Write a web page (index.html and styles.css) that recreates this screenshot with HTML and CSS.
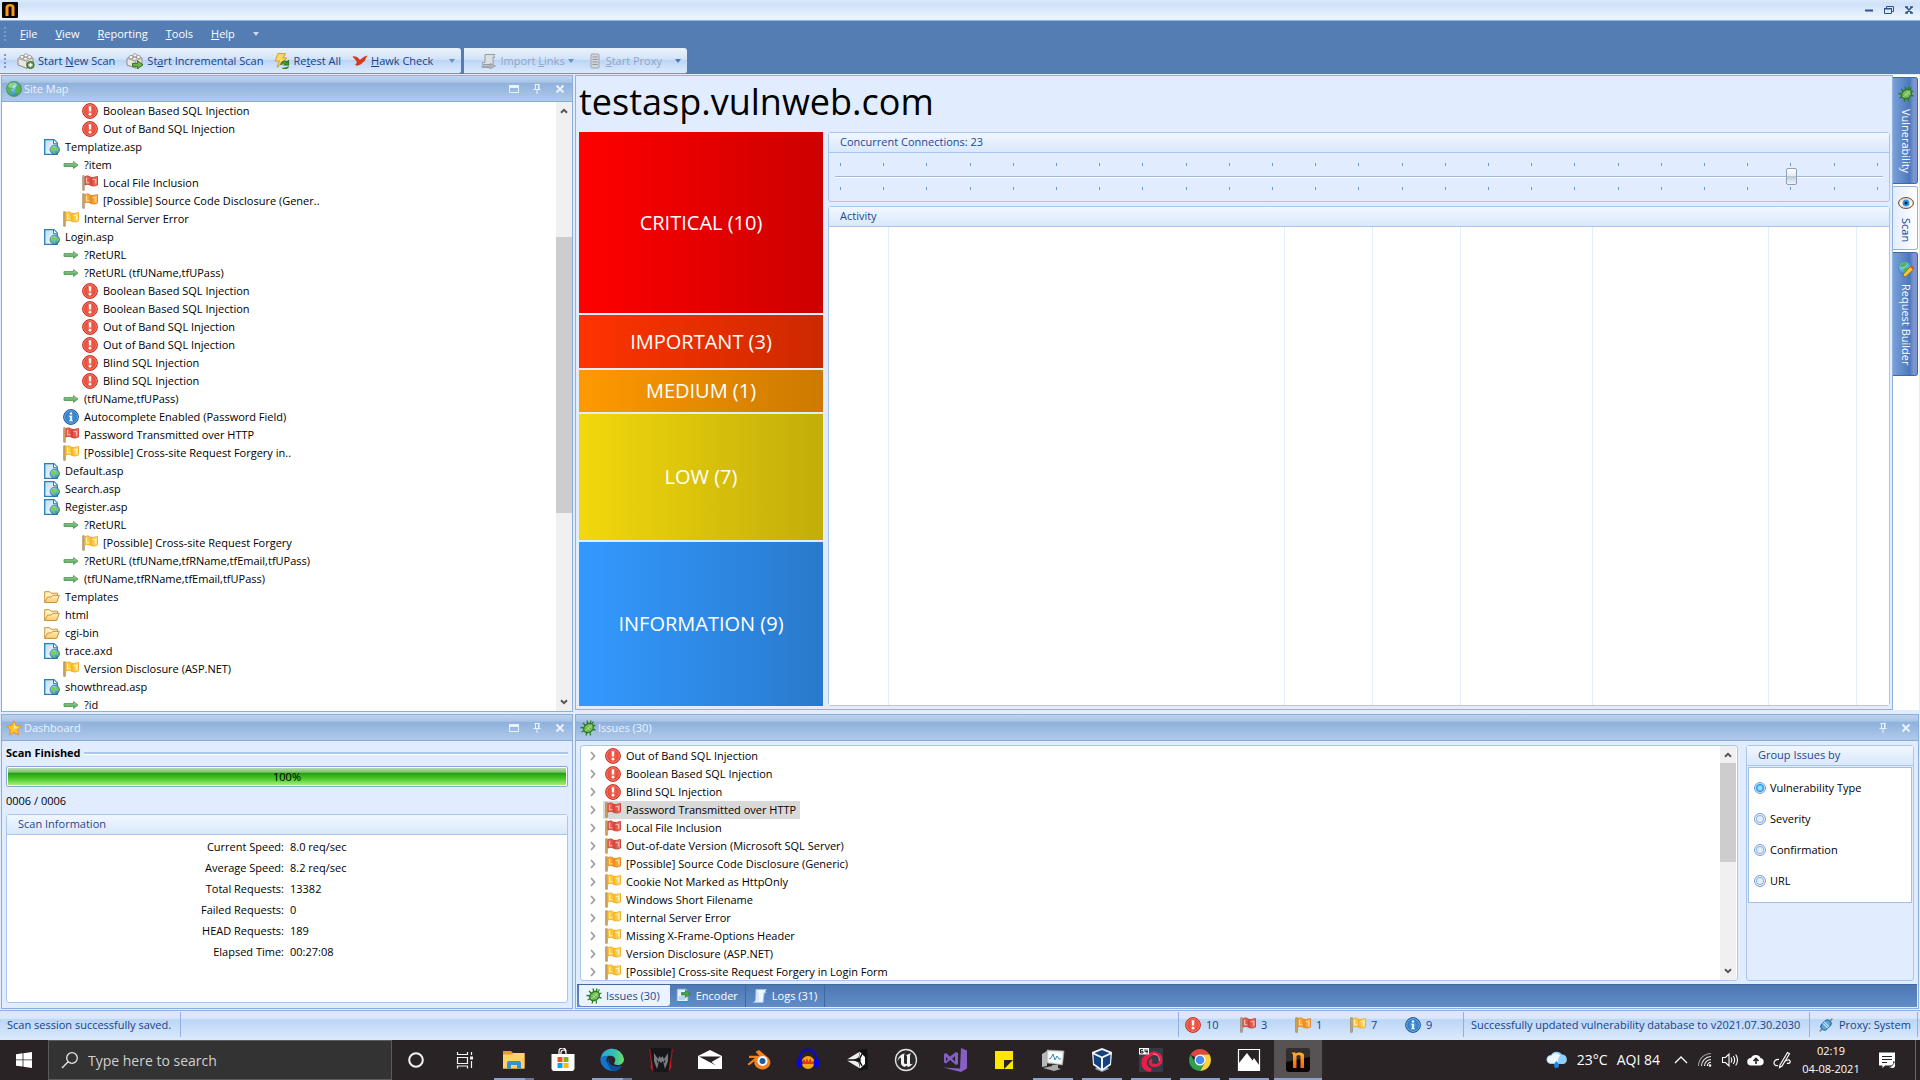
FILE: index.html
```html
<!DOCTYPE html>
<html lang="en">
<head>
<meta charset="utf-8">
<title>testasp.vulnweb.com</title>
<link rel="stylesheet" href="styles.css">
</head>
<body>
<svg class="defs" width="0" height="0" aria-hidden="true">
  <defs>
    <linearGradient id="g-red" x1="0" y1="0" x2="1" y2="0"><stop offset="0" stop-color="#f4766a"/><stop offset=".5" stop-color="#d94538"/><stop offset="1" stop-color="#f98376"/></linearGradient>
    <linearGradient id="g-orange" x1="0" y1="0" x2="1" y2="0"><stop offset="0" stop-color="#ffc04a"/><stop offset=".5" stop-color="#f08c1c"/><stop offset="1" stop-color="#ffc768"/></linearGradient>
    <linearGradient id="g-yellow" x1="0" y1="0" x2="1" y2="0"><stop offset="0" stop-color="#ffdc5e"/><stop offset=".5" stop-color="#fbb929"/><stop offset="1" stop-color="#ffe88a"/></linearGradient>
    <linearGradient id="g-arrow" x1="0" y1="0" x2="0" y2="1"><stop offset="0" stop-color="#a6dca0"/><stop offset="1" stop-color="#3f9a44"/></linearGradient>
    <linearGradient id="g-folder" x1="0" y1="0" x2="0" y2="1"><stop offset="0" stop-color="#fff1b8"/><stop offset="1" stop-color="#f9c96b"/></linearGradient>
    <linearGradient id="g-page" x1="0" y1="0" x2="1" y2="1"><stop offset="0" stop-color="#b9ddf2"/><stop offset="1" stop-color="#ffffff"/></linearGradient>
    <radialGradient id="g-globe" cx=".35" cy=".3" r=".8"><stop offset="0" stop-color="#9fe0ff"/><stop offset="1" stop-color="#1f78c4"/></radialGradient>
    <radialGradient id="g-crit"><stop offset="0" stop-color="#ff6e5c"/><stop offset="1" stop-color="#dd3a2a"/></radialGradient>
    <radialGradient id="g-info"><stop offset="0" stop-color="#56a8ea"/><stop offset="1" stop-color="#2268b4"/></radialGradient>
    <linearGradient id="g-edge" x1="0" y1="0" x2="1" y2="0"><stop offset="0" stop-color="#2ba4dd"/><stop offset=".6" stop-color="#35c1b1"/><stop offset="1" stop-color="#6be05f"/></linearGradient>
    <linearGradient id="g-n" x1="0" y1="0" x2="0" y2="1"><stop offset="0" stop-color="#ffb02e"/><stop offset="1" stop-color="#f0660a"/></linearGradient>
  </defs>
  <symbol id="i-crit" viewBox="0 0 16 16"><circle cx="8" cy="8" r="7.4" fill="url(#g-crit)" stroke="#c23022"/><circle cx="8" cy="8" r="6.3" fill="none" stroke="#ff9686" stroke-width=".8"/><path d="M6.600 3.200h2.800l-.5 5.400H7.100z" fill="#fff"/><circle cx="8" cy="11.200" r="1.400" fill="#fff"/></symbol>
  <symbol id="i-info" viewBox="0 0 16 16"><circle cx="8" cy="8" r="7.4" fill="url(#g-info)" stroke="#1d5a9c"/><circle cx="8" cy="8" r="6.3" fill="none" stroke="#8cc4f2" stroke-width=".8"/><circle cx="8" cy="4.4" r="1.2" fill="#fff"/><path d="M6.3 6.8h2.6v4.4h1v1H6.2v-1h1V7.8h-.9z" fill="#fff"/></symbol>
  <symbol id="i-flag-red" viewBox="0 0 16 16"><path d="M1.500 .5v15" stroke="#7b5a28" stroke-width="2"/><path d="M1.500 1v14" stroke="#d1a765" stroke-width=".9"/><path d="M3 1.600C5 .6 7 .8 8.600 2.200 10.500 3 12 2.200 15.500 1.500v8.500c-2.500 1.200-5 1.300-7 .2-1.500-1-3.500-1.200-5.500-.2z" fill="url(#g-red)" stroke="#c9473c"/><path d="M8.600 2.500v8" stroke="#c9473c" stroke-width=".7"/><path d="M4.600 3v4.800h2.800M10.500 4.600h3.200v3.800" fill="none" stroke="#ffc9c2" stroke-width=".9"/></symbol>
  <symbol id="i-flag-orange" viewBox="0 0 16 16"><path d="M1.500 .5v15" stroke="#7b5a28" stroke-width="2"/><path d="M1.500 1v14" stroke="#d1a765" stroke-width=".9"/><path d="M3 1.600C5 .6 7 .8 8.600 2.200 10.500 3 12 2.200 15.500 1.500v8.500c-2.500 1.200-5 1.300-7 .2-1.500-1-3.500-1.200-5.500-.2z" fill="url(#g-orange)" stroke="#e58a24"/><path d="M8.600 2.500v8" stroke="#e58a24" stroke-width=".7"/><path d="M4.600 3v4.800h2.800M10.500 4.600h3.200v3.800" fill="none" stroke="#ffe5ae" stroke-width=".9"/></symbol>
  <symbol id="i-flag-yellow" viewBox="0 0 16 16"><path d="M1.500 .5v15" stroke="#7b5a28" stroke-width="2"/><path d="M1.500 1v14" stroke="#d1a765" stroke-width=".9"/><path d="M3 1.600C5 .6 7 .8 8.600 2.200 10.500 3 12 2.200 15.500 1.500v8.500c-2.500 1.200-5 1.300-7 .2-1.500-1-3.500-1.200-5.500-.2z" fill="url(#g-yellow)" stroke="#f0b02e"/><path d="M8.600 2.500v8" stroke="#f0b02e" stroke-width=".7"/><path d="M4.600 3v4.800h2.800M10.500 4.600h3.200v3.800" fill="none" stroke="#fff6c8" stroke-width=".9"/></symbol>
  <symbol id="i-arrow" viewBox="0 0 16 16"><path d="M1 6.500h9.500V4.500L15 8l-4.500 3.500v-2H1z" fill="url(#g-arrow)" stroke="#4d9a50" stroke-width=".8"/></symbol>
  <symbol id="i-page" viewBox="0 0 16 16"><path d="M.7.7h9.300l3.300 3.300v11.300H.7z" fill="url(#g-page)" stroke="#2c7fb4" stroke-width="1.300"/><path d="M9.500.7v4h4" fill="#fff" stroke="#2c7fb4"/><circle cx="10.800" cy="10.700" r="4.700" fill="url(#g-globe)" stroke="#2b6f9e" stroke-width=".7"/><path d="M8.500 7.300l3 1.700-1.700 3.200 2 2.700-2.600-1.200-1.300-4zM12.500 7.500l2.200 2-.5 3.500-1.700-1.500z" fill="#7ed321"/></symbol>
  <symbol id="i-folder" viewBox="0 0 16 16"><path d="M.7 13.500V2.700h5l1.300 1.500h6.500v3" fill="#fff0c0" stroke="#c9923c"/><path d="M.7 13.500L3.600 8h3.600l1.600-1.700h6.500l-2.600 7.200z" fill="url(#g-folder)" stroke="#c9923c"/></symbol>
  <symbol id="i-globe" viewBox="0 0 16 16"><circle cx="8" cy="8" r="7.300" fill="url(#g-globe)" stroke="#4c9a48" stroke-width="1.200"/><path d="M3 3.500l4-1.700 2 1.700-2.500 2 .5 2-3 1.500 2.500 2-.5 3-3-2.500-1-4zM9.500 6l3-2.500 2 3-.5 5-3 2.500-1.500-4z" fill="#55b545"/><ellipse cx="6.500" cy="4.500" rx="4" ry="2.500" fill="#fff" opacity=".35"/></symbol>
  <symbol id="i-star" viewBox="0 0 16 16"><path d="M8 .8l2.200 4.800 5.200.6-3.900 3.500 1.100 5.300L8 12.300 3.400 15l1.100-5.300L.6 6.200l5.200-.6z" fill="#ffc52e" stroke="#e8912a"/><path d="M8 2.800l1.300 3.600 3.500.6L8 9z" fill="#fff0a0" opacity=".8"/></symbol>
  <symbol id="i-bug" viewBox="0 0 16 16"><path d="M3 3l3 3M7 .5l1 4M11 .5l-1 4M.5 7.500l5 .5M1.500 12l4-2M6 15.500l1.500-4M10.500 15.500l-.5-4M15.500 5l-3.500 1.500M15.500 10l-4-1M13.500 1.500l-2 3" stroke="#2c7d22" stroke-width="1.300"/><ellipse cx="8.500" cy="8" rx="5.300" ry="4.200" transform="rotate(-38 8.500 8)" fill="#6fb650" stroke="#2b7a22" stroke-width="1.200"/><path d="M5 11l7-6M6.500 6.800l4 4M8.500 5l3.500 3.500" stroke="#c2e6a8" stroke-width=".8"/></symbol>
  <symbol id="i-brick" viewBox="0 0 18 16"><path d="M1 5.500L6 3l10 2v7l-6 3.300L1 12z" fill="#e9e7e3" stroke="#8f8b84"/><path d="M1 5.500l8.500 2.800L16 5M9.500 8.300v7" fill="none" stroke="#aaa69e"/><ellipse cx="5" cy="4" rx="2" ry="1.600" fill="#fafafa" stroke="#8f8b84" stroke-width=".8"/><ellipse cx="9" cy="2.400" rx="2" ry="1.600" fill="#fafafa" stroke="#8f8b84" stroke-width=".8"/><ellipse cx="12.500" cy="4" rx="2" ry="1.600" fill="#fafafa" stroke="#8f8b84" stroke-width=".8"/><ellipse cx="8.500" cy="5.800" rx="2" ry="1.500" fill="#fafafa" stroke="#8f8b84" stroke-width=".8"/></symbol>
  <symbol id="i-new" viewBox="0 0 18 16"><use href="#i-brick" width="18" height="16"/><circle cx="13.500" cy="12" r="3.600" fill="#5f9f45" stroke="#376b26"/><path d="M13.500 10v4M11.500 12h4" stroke="#fff" stroke-width="1.300"/></symbol>
  <symbol id="i-incr" viewBox="0 0 18 16"><use href="#i-brick" width="18" height="16"/><path d="M6.500 10.300h5V7.800l5.500 4-5.500 4v-2.500h-5z" fill="#6bb848" stroke="#376b26"/></symbol>
  <symbol id="i-retest" viewBox="0 0 16 16"><path d="M4 .6h7.500L8.800 5h4L3 14.500 5.500 8H1.200z" fill="#ffd968" stroke="#d79a2c"/><path d="M7 12a3.600 3.600 0 0 1 6-3l1.500-1.200V12h-4l1.300-1.300M14.500 13.500a4 4 0 0 1-6 1.500" fill="#4b9b38" stroke="#2f7a22" stroke-width="1.200"/></symbol>
  <symbol id="i-hawk" viewBox="0 0 16 16"><path d="M.5 3.300c3.500-.3 6 1.200 7.300 3.700C9.500 6 11 3.500 15.700 2.500c-.7 1.200-1.200 2-2 2.700.3 1.200-1.200 3.500-3.200 4.300-.5 1.500-2.500 2.500-4.200 2.700l-1.800 1-.2-1.300-1.300-.2 1.300-1.200c.7-1 .7-2.200-.5-3C3 6.500 1.500 5 .5 3.300z" fill="#d8391d"/></symbol>
  <symbol id="i-import" viewBox="0 0 16 16"><path d="M4 1.500h10c-1.500 1-1.500 3 0 3h-2v7H1.500v-2H4z" fill="#dcdfe4" stroke="#989ca3"/><path d="M1 13h8v-2.500L14.500 13 9 16v-1.500H1z" fill="#b4b7bc" stroke="#909498" stroke-width=".7"/></symbol>
  <symbol id="i-server" viewBox="0 0 16 16"><rect x="4" y="1" width="8" height="14" rx="1" fill="#d2d5da" stroke="#a1a5ac"/><path d="M5.500 4h5M5.500 6.500h5M5.500 9h5M5.500 11.500h5" stroke="#93979e"/></symbol>
  <symbol id="i-enc" viewBox="0 0 16 16"><path d="M1 1h9l2 2v12H1z" fill="#e4f1fc" stroke="#6f9fd0"/><path d="M1 13h12v2.500H1z" fill="#3f8ad2"/><path d="M3 9h6M3 11h6" stroke="#8bb5de"/><path d="M5.500 4.500h4V2l5 3.800-5 3.800V7h-4z" fill="#4ca24a" stroke="#2d7430" stroke-width=".7"/></symbol>
  <symbol id="i-log" viewBox="0 0 16 16"><path d="M4 1.500h10.500c-1.500.5-1.500 2.500-.2 3h-2L11 14.500H1.500c1.800-.6 2-2 2.300-4z" fill="#eef6fe" stroke="#9cc2ea"/><path d="M4.500 3c1.500 2 2 6 1.500 11" fill="none" stroke="#cfe1f5" stroke-width="1.500"/></symbol>
  <symbol id="i-eye" viewBox="0 0 16 16"><ellipse cx="8" cy="8" rx="7.500" ry="5.500" fill="#f3d2b0" stroke="#6f5840"/><ellipse cx="8" cy="8.300" rx="6" ry="3.700" fill="#fff"/><circle cx="8" cy="8" r="3.500" fill="#2f95e4"/><circle cx="8" cy="8" r="1.500" fill="#0b2238"/></symbol>
  <symbol id="i-build" viewBox="0 0 16 16"><circle cx="7" cy="7" r="6.500" fill="url(#g-globe)" stroke="#3e7ea8" stroke-width=".7"/><path d="M2 4l4-3 3 1.500-2 3-4 1zM5 8l4-2 4 1-2 5-4-1z" fill="#55b545"/><path d="M5.500 13L12.500 5.500l3 2.700L8 15.500l-3 .3z" fill="#f5c73b" stroke="#7a5717" stroke-width=".7"/><path d="M12 6l1.800-1.800L16.500 7l-1.500 1.600z" fill="#d94c3c"/></symbol>
  <symbol id="i-plug" viewBox="0 0 16 16"><g transform="rotate(45 8 8)"><path d="M8-1v18" stroke="#8d8f86" stroke-width="1.800"/><rect x="4.500" y="2.500" width="7" height="11" rx="3" fill="#58a5de" stroke="#2768a3"/><path d="M4.500 7h7M4.500 9h7" stroke="#d3ebfb"/></g></symbol>
  <symbol id="i-max" viewBox="0 0 12 12"><path d="M1.500 2.500h9v7h-9z" fill="none" stroke="currentColor"/><path d="M1 2h10v3H1z" fill="currentColor"/></symbol>
  <symbol id="i-pin" viewBox="0 0 12 12"><path d="M4.500 1v5.500M3.500 1.500h5M2.500 6.500h7M6 7v4" fill="none" stroke="currentColor"/><path d="M7 1h1.500v5.500H7z" fill="currentColor"/></symbol>
  <symbol id="i-close" viewBox="0 0 12 12"><path d="M2.500 2.500l7 7M9.500 2.500l-7 7" stroke="currentColor" stroke-width="2"/></symbol>
  <symbol id="i-up" viewBox="0 0 8 8"><path d="M1 5.800L4 2.800l3 3" fill="none" stroke="currentColor" stroke-width="2"/></symbol>
  <symbol id="i-down" viewBox="0 0 8 8"><path d="M1 2.200l3 3 3-3" fill="none" stroke="currentColor" stroke-width="2"/></symbol>
  <symbol id="i-right" viewBox="0 0 8 10"><path d="M2 1l3.500 4L2 9" fill="none" stroke="currentColor" stroke-width="1.800"/></symbol>
  <symbol id="i-caret" viewBox="0 0 6 4"><path d="M0 0h6L3 4z" fill="currentColor"/></symbol>
  <symbol id="i-n" viewBox="0 0 24 24"><rect width="24" height="24" rx="3" fill="#0b0604"/><path d="M0 3a3 3 0 0 1 3-3h18a3 3 0 0 1 3 3v6L0 14z" fill="#fff" opacity=".16"/><path d="M7 20V6.500l-1.500-2h4V6c2-2 7.500-2 8.500.8V20h-3.500V8c-1-1.500-3-1.300-4 0v12z" fill="url(#g-n)"/></symbol>
</svg>

<header class="titlebar">
  <svg class="applogo" viewBox="0 0 16 16"><rect width="16" height="16" rx="1" fill="#0b0300"/><path d="M3.500 14V5C3.500 1 12.500 1 12.500 5v9h-3V5.500c0-1.300-3-1.300-3 0V14z" fill="#f59a1c"/></svg>
  <div class="winbtns">
    <button aria-label="Minimize"><svg viewBox="0 0 12 12"><path d="M2 6.500h8" stroke="#2f5489" stroke-width="2"/></svg></button>
    <button aria-label="Restore"><svg viewBox="0 0 12 12"><path d="M1.500 4.500h7v5h-7zM3.500 4V2.500h7v5H9" fill="none" stroke="#2f5489"/><path d="M1 4h8v1.500H1z" fill="#2f5489"/></svg></button>
    <button aria-label="Close"><svg viewBox="0 0 12 12"><path d="M3 3l6 6M9 3L3 9M2 3h3M7 3h3M2 9h3M7 9h3" stroke="#2f5489" stroke-width="1.500"/></svg></button>
  </div>
</header>
<nav class="menubar">
  <span class="grip"></span>
  <button><u>F</u>ile</button><button><u>V</u>iew</button><button><u>R</u>eporting</button><button><u>T</u>ools</button><button><u>H</u>elp</button>
  <svg class="caret"><use href="#i-caret"/></svg>
</nav>
<div class="toolbars">
  <div class="toolbar first">
    <span class="grip"></span>
    <button><svg class="ic wide"><use href="#i-new"/></svg><span>Start <u>N</u>ew Scan</span></button>
    <button><svg class="ic wide"><use href="#i-incr"/></svg><span>St<u>a</u>rt Incremental Scan</span></button>
    <button><svg class="ic"><use href="#i-retest"/></svg><span>Re<u>t</u>est All</span></button>
    <button><svg class="ic"><use href="#i-hawk"/></svg><span><u>H</u>awk Check</span></button>
    <svg class="caret"><use href="#i-caret"/></svg>
  </div>
  <div class="toolbar second">
    <span class="grip"></span>
    <button disabled><svg class="ic"><use href="#i-import"/></svg><span>Import <u>L</u>inks</span><svg class="caret"><use href="#i-caret"/></svg></button>
    <button disabled><svg class="ic"><use href="#i-server"/></svg><span><u>S</u>tart Proxy</span></button>
    <svg class="caret"><use href="#i-caret"/></svg>
  </div>
</div>

<main class="workspace">
  <section class="panel sitemap">
    <header class="phead"><svg class="ic"><use href="#i-globe"/></svg><h2>Site Map</h2>
      <button aria-label="Maximize"><svg><use href="#i-max"/></svg></button><button aria-label="Pin"><svg><use href="#i-pin"/></svg></button><button aria-label="Close"><svg><use href="#i-close"/></svg></button></header>
    <div class="scroller">
      <ul class="tree">
        <li class="l3"><svg class="ic"><use href="#i-crit"/></svg>Boolean Based SQL Injection</li>
        <li class="l3"><svg class="ic"><use href="#i-crit"/></svg>Out of Band SQL Injection</li>
        <li class="l1"><svg class="ic"><use href="#i-page"/></svg>Templatize.asp</li>
        <li class="l2"><svg class="ic"><use href="#i-arrow"/></svg>?item</li>
        <li class="l3"><svg class="ic"><use href="#i-flag-red"/></svg>Local File Inclusion</li>
        <li class="l3"><svg class="ic"><use href="#i-flag-orange"/></svg>[Possible] Source Code Disclosure (Gener..</li>
        <li class="l2"><svg class="ic"><use href="#i-flag-yellow"/></svg>Internal Server Error</li>
        <li class="l1"><svg class="ic"><use href="#i-page"/></svg>Login.asp</li>
        <li class="l2"><svg class="ic"><use href="#i-arrow"/></svg>?RetURL</li>
        <li class="l2"><svg class="ic"><use href="#i-arrow"/></svg>?RetURL (tfUName,tfUPass)</li>
        <li class="l3"><svg class="ic"><use href="#i-crit"/></svg>Boolean Based SQL Injection</li>
        <li class="l3"><svg class="ic"><use href="#i-crit"/></svg>Boolean Based SQL Injection</li>
        <li class="l3"><svg class="ic"><use href="#i-crit"/></svg>Out of Band SQL Injection</li>
        <li class="l3"><svg class="ic"><use href="#i-crit"/></svg>Out of Band SQL Injection</li>
        <li class="l3"><svg class="ic"><use href="#i-crit"/></svg>Blind SQL Injection</li>
        <li class="l3"><svg class="ic"><use href="#i-crit"/></svg>Blind SQL Injection</li>
        <li class="l2"><svg class="ic"><use href="#i-arrow"/></svg>(tfUName,tfUPass)</li>
        <li class="l2"><svg class="ic"><use href="#i-info"/></svg>Autocomplete Enabled (Password Field)</li>
        <li class="l2"><svg class="ic"><use href="#i-flag-red"/></svg>Password Transmitted over HTTP</li>
        <li class="l2"><svg class="ic"><use href="#i-flag-yellow"/></svg>[Possible] Cross-site Request Forgery in..</li>
        <li class="l1"><svg class="ic"><use href="#i-page"/></svg>Default.asp</li>
        <li class="l1"><svg class="ic"><use href="#i-page"/></svg>Search.asp</li>
        <li class="l1"><svg class="ic"><use href="#i-page"/></svg>Register.asp</li>
        <li class="l2"><svg class="ic"><use href="#i-arrow"/></svg>?RetURL</li>
        <li class="l3"><svg class="ic"><use href="#i-flag-yellow"/></svg>[Possible] Cross-site Request Forgery</li>
        <li class="l2"><svg class="ic"><use href="#i-arrow"/></svg>?RetURL (tfUName,tfRName,tfEmail,tfUPass)</li>
        <li class="l2"><svg class="ic"><use href="#i-arrow"/></svg>(tfUName,tfRName,tfEmail,tfUPass)</li>
        <li class="l1"><svg class="ic"><use href="#i-folder"/></svg>Templates</li>
        <li class="l1"><svg class="ic"><use href="#i-folder"/></svg>html</li>
        <li class="l1"><svg class="ic"><use href="#i-folder"/></svg>cgi-bin</li>
        <li class="l1"><svg class="ic"><use href="#i-page"/></svg>trace.axd</li>
        <li class="l2"><svg class="ic"><use href="#i-flag-yellow"/></svg>Version Disclosure (ASP.NET)</li>
        <li class="l1"><svg class="ic"><use href="#i-page"/></svg>showthread.asp</li>
        <li class="l2"><svg class="ic"><use href="#i-arrow"/></svg>?id</li>
      </ul>
      <div class="sbar tall"><svg><use href="#i-up"/></svg><div class="groove"><div class="thumb"></div></div><svg><use href="#i-down"/></svg></div>
    </div>
  </section>

  <section class="scan">
    <div class="doc">
      <h1>testasp.vulnweb.com</h1>
      <div class="docbody">
        <div class="tiles">
          <div class="tile critical">CRITICAL (10)</div>
          <div class="tile important">IMPORTANT (3)</div>
          <div class="tile medium">MEDIUM (1)</div>
          <div class="tile low">LOW (7)</div>
          <div class="tile information">INFORMATION (9)</div>
        </div>
        <div class="charts">
          <div class="group conn">
            <h3><label for="conn">Concurrent Connections: 23</label></h3>
            <div class="slider">
              <div class="ticks"><i></i><i></i><i></i><i></i><i></i><i></i><i></i><i></i><i></i><i></i><i></i><i></i><i></i><i></i><i></i><i></i><i></i><i></i><i></i><i></i><i></i><i></i><i></i><i></i><i></i></div>
              <input type="range" id="conn" min="1" max="25" value="23">
              <div class="ticks"><i></i><i></i><i></i><i></i><i></i><i></i><i></i><i></i><i></i><i></i><i></i><i></i><i></i><i></i><i></i><i></i><i></i><i></i><i></i><i></i><i></i><i></i><i></i><i></i><i></i></div>
            </div>
          </div>
          <div class="group activity">
            <h3>Activity</h3>
            <div class="cols"><span></span><span></span><span></span><span></span><span></span><span></span><span></span><span></span></div>
          </div>
        </div>
      </div>
    </div>
    <nav class="sidetabs">
      <button class="vul"><svg class="ic"><use href="#i-bug"/></svg>Vulnerability</button>
      <button class="on"><svg class="ic"><use href="#i-eye"/></svg>Scan</button>
      <button class="req"><svg class="ic"><use href="#i-build"/></svg>Request Builder</button>
    </nav>
  </section>

  <section class="panel dashboard">
    <header class="phead"><svg class="ic"><use href="#i-star"/></svg><h2>Dashboard</h2>
      <button aria-label="Maximize"><svg><use href="#i-max"/></svg></button><button aria-label="Pin"><svg><use href="#i-pin"/></svg></button><button aria-label="Close"><svg><use href="#i-close"/></svg></button></header>
    <div class="dash">
      <div class="finished"><b>Scan Finished</b></div>
      <div class="progress" role="progressbar" aria-label="Scan progress" aria-valuenow="100"><span style="width:100%">100%</span></div>
      <div class="count">0006 / 0006</div>
      <div class="group info">
        <h3>Scan Information</h3>
        <table>
          <tr><th>Current Speed:</th><td>8.0 req/sec</td></tr>
          <tr><th>Average Speed:</th><td>8.2 req/sec</td></tr>
          <tr><th>Total Requests:</th><td>13382</td></tr>
          <tr><th>Failed Requests:</th><td>0</td></tr>
          <tr><th>HEAD Requests:</th><td>189</td></tr>
          <tr><th>Elapsed Time:</th><td>00:27:08</td></tr>
        </table>
      </div>
    </div>
  </section>

  <section class="panel issues">
    <header class="phead"><svg class="ic"><use href="#i-bug"/></svg><h2>Issues (30)</h2>
      <button aria-label="Pin"><svg><use href="#i-pin"/></svg></button><button aria-label="Close"><svg><use href="#i-close"/></svg></button></header>
    <div class="issuebody">
      <div class="scroller framed">
        <ul class="list">
          <li><svg class="exp"><use href="#i-right"/></svg><span><svg class="ic"><use href="#i-crit"/></svg>Out of Band SQL Injection</span></li>
          <li><svg class="exp"><use href="#i-right"/></svg><span><svg class="ic"><use href="#i-crit"/></svg>Boolean Based SQL Injection</span></li>
          <li><svg class="exp"><use href="#i-right"/></svg><span><svg class="ic"><use href="#i-crit"/></svg>Blind SQL Injection</span></li>
          <li><svg class="exp"><use href="#i-right"/></svg><span class="sel"><svg class="ic"><use href="#i-flag-red"/></svg>Password Transmitted over HTTP</span></li>
          <li><svg class="exp"><use href="#i-right"/></svg><span><svg class="ic"><use href="#i-flag-red"/></svg>Local File Inclusion</span></li>
          <li><svg class="exp"><use href="#i-right"/></svg><span><svg class="ic"><use href="#i-flag-red"/></svg>Out-of-date Version (Microsoft SQL Server)</span></li>
          <li><svg class="exp"><use href="#i-right"/></svg><span><svg class="ic"><use href="#i-flag-orange"/></svg>[Possible] Source Code Disclosure (Generic)</span></li>
          <li><svg class="exp"><use href="#i-right"/></svg><span><svg class="ic"><use href="#i-flag-yellow"/></svg>Cookie Not Marked as HttpOnly</span></li>
          <li><svg class="exp"><use href="#i-right"/></svg><span><svg class="ic"><use href="#i-flag-yellow"/></svg>Windows Short Filename</span></li>
          <li><svg class="exp"><use href="#i-right"/></svg><span><svg class="ic"><use href="#i-flag-yellow"/></svg>Internal Server Error</span></li>
          <li><svg class="exp"><use href="#i-right"/></svg><span><svg class="ic"><use href="#i-flag-yellow"/></svg>Missing X-Frame-Options Header</span></li>
          <li><svg class="exp"><use href="#i-right"/></svg><span><svg class="ic"><use href="#i-flag-yellow"/></svg>Version Disclosure (ASP.NET)</span></li>
          <li><svg class="exp"><use href="#i-right"/></svg><span><svg class="ic"><use href="#i-flag-yellow"/></svg>[Possible] Cross-site Request Forgery in Login Form</span></li>
        </ul>
        <div class="sbar short"><svg><use href="#i-up"/></svg><div class="groove"><div class="thumb"></div></div><svg><use href="#i-down"/></svg></div>
      </div>
      <div class="group groupby">
        <h3>Group Issues by</h3>
        <div class="radios">
          <label><input type="radio" name="by" checked>Vulnerability Type</label>
          <label><input type="radio" name="by">Severity</label>
          <label><input type="radio" name="by">Confirmation</label>
          <label><input type="radio" name="by">URL</label>
        </div>
      </div>
    </div>
    <nav class="btabs">
      <button class="on"><svg class="ic"><use href="#i-bug"/></svg>Issues (30)</button>
      <button><svg class="ic"><use href="#i-enc"/></svg>Encoder</button>
      <button><svg class="ic"><use href="#i-log"/></svg>Logs (31)</button>
    </nav>
  </section>
</main>

<footer class="status">
  <span class="cell msg">Scan session successfully saved.</span>
  <span class="cell counts">
    <span><svg class="ic"><use href="#i-crit"/></svg>10</span>
    <span><svg class="ic"><use href="#i-flag-red"/></svg>3</span>
    <span><svg class="ic"><use href="#i-flag-orange"/></svg>1</span>
    <span><svg class="ic"><use href="#i-flag-yellow"/></svg>7</span>
    <span><svg class="ic"><use href="#i-info"/></svg>9</span>
  </span>
  <span class="cell upd">Successfully updated vulnerability database to v2021.07.30.2030</span>
  <span class="cell proxy"><svg class="ic"><use href="#i-plug"/></svg>Proxy: System</span>
</footer>

<footer class="taskbar">
  <button class="start" aria-label="Start"><svg viewBox="0 0 16 16"><path d="M0 2.200l6.600-.9v6.200H0zM7.400 1.200L16 0v7.500H7.400zM0 8.300h6.600v6.300L0 13.700zM7.400 8.300H16V16l-8.600-1.200z" fill="#fff"/></svg></button>
  <label class="search"><svg viewBox="0 0 18 18"><circle cx="11" cy="7" r="5.300" fill="none" stroke="#e6e6e6" stroke-width="1.300"/><path d="M7.200 10.800L1 17" stroke="#e6e6e6" stroke-width="1.400"/></svg><input type="text" placeholder="Type here to search" aria-label="Search"></label>
  <div class="apps">
    <button aria-label="Cortana"><svg viewBox="0 0 24 24"><circle cx="12" cy="12" r="6.800" fill="none" stroke="#f4f4f4" stroke-width="2"/></svg></button>
    <button aria-label="Task View"><svg viewBox="0 0 24 24"><path d="M4.500 9.500h10v6h-10zM4.500 4v2.500h10V4M4.500 20.500V18h10v2.500M18.500 4v3M18.500 13v7" fill="none" stroke="#f4f4f4" stroke-width="1.200"/><path d="M17 8.500h3v3h-3z" fill="#f4f4f4"/></svg></button>
    <button class="run split" aria-label="File Explorer"><svg viewBox="0 0 24 24"><path d="M1 3h8l2 2h11.500v15.500H1z" fill="#e6a117"/><path d="M1 6.500h9l1.500-1.500h11v15.500H1z" fill="#fcd466"/><path d="M5 20.500v-5.500a2 2 0 0 1 2-2h10a2 2 0 0 1 2 2v5.500h-4V17H9v3.500z" fill="#3a8ed2"/></svg></button>
    <button aria-label="Store"><svg viewBox="0 0 24 24"><path d="M8 6V3.500a3.500 3.500 0 0 1 7 0V6M10 6V4.500a2.500 2.500 0 0 1 5 0" fill="none" stroke="#fff" stroke-width="1.200"/><path d="M.5 6h23v15l-1.500 2H2l-1.500-2z" fill="#fff"/><path d="M6.500 9h5v5h-5z" fill="#f25022"/><path d="M12.500 9h5v5h-5z" fill="#7fba00"/><path d="M6.500 15h5v5h-5z" fill="#00a4ef"/><path d="M12.500 15h5v5h-5z" fill="#ffb900"/></svg></button>
    <button class="run split" aria-label="Edge"><svg viewBox="0 0 24 24"><path d="M.3 10.500A12 12 0 0 1 24 11c0 4-3 6-6.500 6-3 0-4-1.300-3-2.500 1.800-2.300.6-6.700-4-6.700C6 7.500 1.500 9 .3 10.500z" fill="url(#g-edge)"/><path d="M.2 11C1.500 8.500 5 7.500 8.500 8 6 9 4 16 13.500 18.500c4 1 7.500-.2 8.500-.8A12 12 0 0 1 .2 11z" fill="#1573c8"/><path d="M8.500 10.500C6 15 9 22 15 23.500c2.500-.5 5.500-3 7-5.800-7 2.800-14-.7-13.500-7.200z" fill="#0d4fa0"/></svg></button>
    <button aria-label="Predator Sense"><svg viewBox="0 0 24 24"><path d="M2 0h20l-1 21-2 3H5l-2-3z" fill="#17171a"/><path d="M.5 1l1.500 12v7l2 3-1-8zM23.500 1L22 13v7l-2 3 1-8z" fill="#e3202b" stroke="#a8161f" stroke-width=".6"/><path d="M5 5l4 6 1.500-3L12 10l1.500-2L15 11l4-6v8l-3 8-2-8-2 2-2-2-2 8-3-8z" fill="#777a80"/><path d="M8 12l1 3M16 12l-1 3" stroke="#222"/></svg></button>
    <button aria-label="Mail"><svg viewBox="0 0 24 24"><path d="M0 8l12-6 12 6v13H0z" fill="#fff"/><path d="M1 8.500h22L13.500 14 18 17.500z" fill="#272325"/></svg></button>
    <button aria-label="Blender"><svg viewBox="0 0 24 24"><path d="M9 3.500l3-1.500 9 7.500a8 7 0 1 1-13.500 3.500L2 17.500.5 16 8 10H2V7.700h10.500L9 4.500z" fill="#f5821f"/><circle cx="15.500" cy="13" r="5" fill="#fff"/><circle cx="15.500" cy="13" r="3" fill="#1d5aa0"/></svg></button>
    <button aria-label="Audacity"><svg viewBox="0 0 24 24"><circle cx="12" cy="14.500" r="6.500" fill="#f6a81c"/><path d="M6 14l2-3 1.500 3L11 10l1.500 4 2-4 1 4 2-1v3H6z" fill="#e03812"/><path d="M3 13a9 11.500 0 0 1 18 0" fill="none" stroke="#0a08d8" stroke-width="2"/><ellipse cx="3.500" cy="15" rx="3" ry="5" fill="#0a08d8"/><ellipse cx="20.500" cy="15" rx="3" ry="5" fill="#0a08d8"/></svg></button>
    <button aria-label="Unity"><svg viewBox="0 0 24 24"><path d="M13 2l9-1 1 20-9 2z" fill="#111"/><path d="M1 12l14-8.500-1.500 6L8 12l5.500 2.500 1.500 6z" fill="#eee"/><path d="M15 4l5 5v7l-5 4.500-.5-7 2-1.500-2.500-1.500z" fill="#fff"/><path d="M1 12h13M14 12l3-6M14 12l3 6" stroke="#111" stroke-width="1.500"/></svg></button>
    <button aria-label="Unreal Engine"><svg viewBox="0 0 24 24"><circle cx="12" cy="12" r="10.500" fill="#2c2a2b" stroke="#e4e4e4" stroke-width="1.300"/><path d="M3.500 13C4 9 7 6 11 5.500c-1 1-1 2-1 3v6c0 1.500 2 2 3 1V8l-1-1c1.500-.2 3-.8 5-2-.7 1.300-1 2-1 4v6.500c0 1 1.500 1 3 0-1.500 2-3 3-5 3.500L12.500 17.500 11 19c-2.500-.5-4-2-4-4V9.500C5.500 10 4.500 11 3.500 13z" fill="#f3f3f3"/></svg></button>
    <button aria-label="Visual Studio"><svg viewBox="0 0 24 24"><path d="M18 0l6 2.500v18L18 24 0 19.500l17 1z" fill="#865fc5"/><path d="M1 6l2-1 4 3.500L13 4l2 1v11l-2 1-6-5-4 3.500-2-1zm2 3v4l2-2zm9-1l-3 2.800 3 2.700z" fill="#865fc5" fill-rule="evenodd"/></svg></button>
    <button aria-label="Sticky Notes"><svg viewBox="0 0 24 24"><path d="M3 3h18v18H3z" fill="#ffe600"/><path d="M12 21v-9h9z" fill="#222"/></svg></button>
    <button class="run" aria-label="Monitor"><svg viewBox="0 0 24 24"><path d="M1 6l5-3v15l-5 1z" fill="#b6b8ba"/><path d="M6 2l17 1-1.500 14L6 15z" fill="#e6e8ea" stroke="#999" stroke-width=".7"/><path d="M7.500 4l13.500.7-1 10.500-12.500-1.400z" fill="#fdfefe"/><path d="M8 11l2-1 2-4 2 6 2-4 2 3h2" fill="none" stroke="#3486c6"/><path d="M11 17h6v4h-6zM2 20l9-2 9 3-7 2z" fill="#a9abac"/></svg></button>
    <button class="run" aria-label="VirtualBox"><svg viewBox="0 0 24 24"><path d="M8 18h8l3 3-7 3-7-3z" fill="#88a0bc"/><path d="M12 0l10 4-1 13-9 6-9-6L2 4z" fill="#f2f6fa"/><path d="M12 2l7.500 3-7.500 3.500L4.500 5zM3.500 6.500l7.500 3.500v10.500l-7-5zM20.500 6.500L13 10v10.500l7-5z" fill="#14427f"/></svg></button>
    <button class="run" aria-label="Debian"><svg viewBox="0 0 24 24"><rect width="24" height="24" fill="#333c46"/><path d="M10 8c3-5 12-3 12 4 0 4-4 6-7.500 5.500C11 17 10.500 13 13 11.500M10 8c-6 4-4 12 2 14-6 1-9-5-8-9 .5-3 3-5 6-5z" fill="none" stroke="#e91e48" stroke-width="3"/><path d="M14 6c5 0 7 4 6 7" fill="none" stroke="#ff8fa4"/><rect width="10" height="6.500" fill="#fff"/><path d="M4 1.500H1.500V5H4V3.300H1.500M6 1.300v2.300h3M8 1.300V5.500" fill="none" stroke="#222"/></svg></button>
    <button class="run" aria-label="Chrome"><svg viewBox="0 0 24 24"><path d="M12 12L2.500 6.500A11 11 0 0 1 21.500 6.500H12z" fill="#e0473a"/><path d="M12 12V6.500h9.500A11 11 0 0 1 12 23l4.500-8z" fill="#fdd13c"/><path d="M12 12l4.500 3L12 23A11 11 0 0 1 2.500 6.500L7.500 15z" fill="#2ba24c"/><circle cx="12" cy="12" r="5.500" fill="#fff"/><circle cx="12" cy="12" r="4.300" fill="#4a8af4"/></svg></button>
    <button class="run" aria-label="Photos"><svg viewBox="0 0 24 24"><path d="M1.500 1.500h21v21h-21z" fill="none" stroke="#fff" stroke-width="1.200"/><path d="M2 22v-7l8-10 5.500 7.500L17 10l5 7v5z" fill="#fff"/></svg></button>
    <button class="run active" aria-label="Netsparker"><svg><use href="#i-n"/></svg></button>
  </div>
  <div class="tray">
    <svg class="weather" viewBox="0 0 22 18"><path d="M5 13a4.500 4.500 0 0 1 0-9 6 5 0 0 1 11-.5 5 5 0 0 1 2 9.500z" fill="#8fd0fa"/><path d="M4.500 12a3.500 3.500 0 0 1 .8-7 5 4.500 0 0 1 9-.5C12 6 12 9 12 12z" fill="#eef8ff"/><path d="M10.500 10c2 2.500 2.500 3.500 2.500 4.500a2.500 2.500 0 0 1-5 0c0-1 .5-2 2.500-4.500z" fill="#1d86e0"/></svg>
    <span class="temp">23°C</span><span class="aqi">AQI 84</span>
    <svg class="t16 chev" viewBox="0 0 16 16"><path d="M2 11l6-6 6 6" fill="none" stroke="#fff" stroke-width="1.300"/></svg>
    <svg class="t16" viewBox="0 0 16 16"><g fill="none" stroke="#eee" stroke-width="1.100"><path d="M1.500 14A12.500 12.500 0 0 1 14 1.500" opacity=".6"/><path d="M4.500 14A9.500 9.500 0 0 1 14 4.500M7.500 14A6.500 6.500 0 0 1 14 7.500M10.300 14a3.700 3.700 0 0 1 3.700-3.700"/></g><circle cx="13" cy="13.500" r="1.300" fill="#fff"/></svg>
    <svg class="t18" viewBox="0 0 18 16"><path d="M1.500 5.500h3L8 2v12l-3.500-3.500h-3z" fill="none" stroke="#fff" stroke-width="1.100"/><path d="M10 5.500q1.600 2.500 0 5M12.300 4q2.700 4 0 8M14.700 2.500q3.600 5.500 0 11" fill="none" stroke="#fff" stroke-width="1.100"/></svg>
    <svg class="t18" viewBox="0 0 18 16"><path d="M4 13.500A3.700 3.700 0 0 1 4 6a5 4.500 0 0 1 9.500 0 3.800 3.800 0 0 1 0 7.500z" fill="#fff"/><path d="M9 12V7M6.500 9L9 6.500 11.500 9" fill="none" stroke="#272325" stroke-width="1.600"/></svg>
    <svg class="t18 pen" viewBox="0 0 18 18"><path d="M7 14L14.500 1.500l2 1.200L9 15l-2.500 1.500zM6 8.500C3 8 1 10 1 12s2 3 4 2.500M11 11c3-2 5-3 6-1s-2 3-3 2" fill="none" stroke="#fff" stroke-width="1.200"/></svg>
    <div class="clock"><span>02:19</span><span>04-08-2021</span></div>
    <svg class="note" viewBox="0 0 16 16"><path d="M0 .5h16v13H6L3.500 16v-2.500H0z" fill="#fff"/><path d="M3 4.500h10M3 7.500h10M3 10.500h5" stroke="#272325" stroke-width="1.100"/><path d="M14.500 9.500a3.600 3.600 0 1 1-4.500 5 4 4 0 0 0 4.500-5z" fill="#fff" stroke="#272325" stroke-width=".8"/></svg>
    <button class="peek" aria-label="Show desktop"></button>
  </div>
</footer>
</body>
</html>
```
FILE: styles.css
```css
* { box-sizing: border-box; }
html, body { height: 100%; margin: 0; }
body {
  display: flex;
  flex-direction: column;
  overflow: hidden;
  background: #e1edff;
  color: #000;
  font: 11px/18px "Open Sans", "Noto Sans", sans-serif;
}
button {
  display: flex;
  align-items: center;
  margin: 0;
  padding: 0;
  border: 0;
  background: none;
  color: inherit;
  font: inherit;
  white-space: pre;
}
ul { margin: 0; padding: 0; list-style: none; }
h1, h2, h3 { margin: 0; font-weight: 400; }
svg { display: block; flex: none; }
.defs { position: absolute; }
.ic { width: 16px; height: 16px; }
.ic.wide { width: 18px; }
.caret { width: 6px; height: 4px; }

/* title bar, menu and tool bars */
.titlebar {
  display: flex;
  flex: none;
  align-items: center;
  justify-content: space-between;
  height: 21px;
  padding: 0 5px 0 2px;
  background: linear-gradient(#dbe9fb, #cfe1f8 20%, #eaf3fd 85%);
  border-bottom: 1px solid #8fb4e3;
}
.applogo { width: 16px; height: 16px; }
.winbtns { display: flex; gap: 8px; }
.winbtns svg { width: 12px; height: 12px; }
.menubar {
  display: flex;
  flex: none;
  align-items: center;
  gap: 18px;
  height: 27px;
  padding: 0 0 2px 4px;
  background: #547db4;
  color: #fff;
}
.menubar .grip { margin-right: -4px; }
.menubar .caret { color: #c9daf2; }
.grip {
  width: 2px;
  height: 14px;
  background: repeating-linear-gradient(#7b9cc9 0 2px, transparent 2px 4px);
}
.toolbars { display: flex; flex: none; gap: 3px; height: 26px; background: #547db4; }
.toolbar {
  display: flex;
  align-items: center;
  padding: 0 6px 0 4px;
  border-radius: 0 3px 3px 0;
  background: linear-gradient(#eaf2fc, #d3e3f8 45%, #bcd5f5 50%, #dcebfd);
  border-bottom: 1px solid #6f95c8;
  color: #15428b;
}
.toolbar button { gap: 3px; }
.toolbar.first { gap: 11px; width: 461px; }
.toolbar.first .caret { margin-left: auto; }
.toolbar.second { gap: 13px; width: 223px; }
.toolbar.second > .caret { margin-left: auto; color: #4d79b6; }
.toolbar button:disabled { color: #8ea6c8; }
.toolbar .caret { color: #6a8fc2; }

/* workspace */
.workspace {
  flex: 1;
  min-height: 0;
  display: grid;
  grid-template-columns: 572px minmax(0, 1fr);
  grid-template-rows: minmax(0, 1fr) 296px;
  gap: 2px;
  padding: 1px 1px 0;
}
.panel {
  display: flex;
  flex-direction: column;
  min-height: 0;
  border: 1px solid #8aaedd;
  background: #e1edff;
}
.dashboard, .issues { margin-bottom: 1px; }
.phead {
  display: flex;
  align-items: center;
  flex: none;
  height: 26px;
  padding: 0 6px 0 4px;
  background: linear-gradient(#bfd5f0, #a8c4e6 25%, #8fb1dc 30%, #b0caea);
  border-bottom: 1px solid #86aadb;
  color: #e9f2ff;
}
.phead h2 { margin-left: 2px; font-size: 11px; line-height: 18px; flex: 1; }
.phead button + button { margin-left: 11px; }
.phead button svg { width: 12px; height: 12px; }
.scroller { display: flex; flex: 1; min-height: 0; background: #fff; overflow: hidden; }
.tree { flex: 1; overflow: hidden; white-space: nowrap; }
.tree li { display: flex; align-items: center; gap: 5px; height: 18px; }
.tree .l1 { padding-left: 42px; }
.tree .l2 { padding-left: 61px; }
.tree .l3 { padding-left: 80px; }
.sbar {
  display: flex;
  flex-direction: column;
  align-items: center;
  flex: none;
  width: 16px;
  padding: 5px 0;
  background: #f0f0f0;
  color: #555;
}
.sbar svg { width: 8px; height: 8px; }
.groove { flex: 1; width: 100%; padding: 4px 0; }
.thumb { background: #cdcdcd; }
.tall .thumb { height: 48%; margin-top: 118px; }
.short .thumb { height: 99px; }

/* scan document */
.scan { display: flex; min-width: 0; min-height: 0; margin-bottom: 2px; background: #fff; }
.doc {
  flex: 1;
  min-width: 0;
  display: flex;
  flex-direction: column;
  padding: 0 2px 3px 3px;
  border: 1px solid #8fb2e3;
  background: #e1edff;
}
.doc h1 { height: 56px; font-size: 36px; line-height: 52px; }
.docbody { flex: 1; min-height: 0; display: flex; gap: 5px; }
.tiles { display: grid; width: 244px; gap: 2px; grid-template-rows: 181fr 53fr 42fr 126fr 164fr; }
.tile {
  display: flex;
  align-items: center;
  justify-content: center;
  color: #fff;
  font-size: 20px;
  line-height: 24px;
}
.critical { background: linear-gradient(90deg, #ff0000, #cc0000); }
.important { background: linear-gradient(90deg, #ff3300, #cc2900); }
.medium { background: linear-gradient(90deg, #ff9900, #cc7a00); }
.low { background: linear-gradient(90deg, #f2d80c, #c2ad0a); }
.information { background: linear-gradient(90deg, #3399ff, #297acc); }
.charts { flex: 1; min-width: 0; display: flex; flex-direction: column; gap: 4px; }
.group { display: flex; flex-direction: column; border: 1px solid #a9c6ee; border-radius: 3px; }
.group h3 {
  flex: none;
  height: 20px;
  padding-left: 11px;
  font-size: 11px;
  line-height: 18px;
  color: #1e4790;
  background: linear-gradient(#f1f7ff, #d9e8fc);
  border-bottom: 1px solid #a9c6ee;
}
.slider { padding: 10px 6px 11px; }
.ticks { display: flex; justify-content: space-between; padding: 0 5px; }
.ticks i { width: 1px; height: 3px; background: #6d97cf; }
.slider input {
  display: block;
  appearance: none;
  width: 100%;
  height: 17px;
  margin: 2px 0;
  background: linear-gradient(transparent 8px, #9db8d8 8px 9px, #fff 9px 10px, transparent 10px);
}
.slider input::-webkit-slider-thumb {
  appearance: none;
  width: 11px;
  height: 17px;
  border: 1px solid #8f9fb3;
  border-radius: 2px;
  background: linear-gradient(#fff, #e6ebf1 45%, #bcc9d8 50%, #f2f5f9);
}
.activity { flex: 1; min-height: 0; }
.cols { flex: 1; display: grid; grid-template-columns: 59fr 396fr 88fr 88fr 132fr 176fr 88fr 33fr; background: #fff; }
.cols span + span { border-left: 1px solid #e3eefd; }
.sidetabs {
  display: flex;
  flex-direction: column;
  gap: 2px;
  width: 26px;
  padding: 2px 1px 0 0;
}
.sidetabs button {
  writing-mode: vertical-rl;
  gap: 7px;
  width: 25px;
  padding: 8px 4px 0 5px;
  border: 1px solid #44699f;
  border-left: 0;
  border-radius: 0 3px 3px 0;
  background: linear-gradient(90deg, #7ba0d8, #4a78bd 70%, #7d95cf 85%);
  color: #fff;
  line-height: 16px;
}
.sidetabs .vul { height: 107px; }
.sidetabs .req { height: 124px; }
.sidetabs .on { height: 64px; background: linear-gradient(90deg, #e1edff, #fff); color: #15428b; border-color: #8fb2e3; }

/* dashboard */
.dash { flex: 1; min-height: 0; display: flex; flex-direction: column; padding: 2px 4px 5px; }
.finished { display: flex; align-items: center; gap: 3px; height: 20px; }
.finished b { font-weight: 700; }
.finished::after { content: ""; flex: 1; height: 2px; background: #a9c6ee; border-bottom: 1px solid #fff; }
.progress { height: 21px; margin-top: 3px; padding: 1px; border: 1px solid #86a8d8; border-radius: 2px; background: #fff; }
.progress span {
  display: block;
  height: 17px;
  line-height: 17px;
  text-align: center;
  background: linear-gradient(#b7dcae, #7fc070 25%, #22a010 30%, #45c424 60%, #a2f07a);
}
.count { height: 27px; padding-top: 5px; }
.info { flex: 1; background: #fff; }
.info table { margin-top: 1px; border-collapse: collapse; width: 100%; }
.info th { width: 277px; padding: 0; font-weight: 400; text-align: right; height: 21px; }
.info td { padding: 0 0 0 6px; }

/* issues */
.issuebody { flex: 1; min-height: 0; display: flex; gap: 8px; padding: 4px 4px 3px; }
.framed { border: 1px solid #a9c6ee; border-radius: 3px; padding-right: 1px; }
.list { flex: 1; overflow: hidden; white-space: nowrap; padding-top: 1px; }
.list li { display: flex; align-items: center; height: 18px; padding-left: 8px; gap: 6px; }
.list li span { display: flex; align-items: center; gap: 5px; height: 18px; padding: 0 4px 0 2px; }
.list .sel { background: #d9d9d9; }
.exp { width: 8px; height: 10px; color: #a0a0a0; }
.groupby { width: 168px; }
.radios {
  display: flex;
  flex-direction: column;
  gap: 13px;
  margin: 1px;
  padding: 11px 5px 12px;
  border: 1px solid #a2bfe4;
  background: #fff;
}
.radios label { display: flex; align-items: center; gap: 4px; height: 18px; }
.radios input {
  appearance: none;
  width: 12px;
  height: 12px;
  margin: 0;
  border: 1px solid #7ba1d6;
  border-radius: 50%;
  background: #e4edfa;
  box-shadow: inset 0 0 0 1px #fff, inset 0 0 0 2px #8fb1e0;
}
.radios input:checked { background: radial-gradient(#9fe0ff 20%, #2a9bf0 50%, #c8e4fb 65%); box-shadow: none; }
.btabs {
  display: flex;
  height: 23px;
  padding-left: 2px;
  background: linear-gradient(#4e78b2, #628cc8);
  border-top: 1px solid #44699f;
  color: #fff;
}
.issues .btabs { margin: 0 1px 1px; }
.btabs button { gap: 4px; padding: 0 7px 0 6px; border-right: 1px solid #3f669f; }
.btabs .on { height: 21px; padding: 0 10px 0 7px; background: #eaf3ff; color: #1e4790; border: 0; border-radius: 0 0 3px 3px; }

/* status bar */
.status {
  display: flex;
  flex: none;
  height: 30px;
  padding: 1px 2px 3px 0;
  background: linear-gradient(#d9e8fc 25%, #bcd6f6 30%, #dbe9fb);
  border-top: 1px solid #8fb2e3;
  color: #15428b;
}
.cell { display: flex; align-items: center; border-right: 1px solid #8fb2e3; white-space: nowrap; }
.msg { width: 181px; padding-left: 7px; }
.counts { width: 286px; margin-left: auto; border-left: 1px solid #8fb2e3; padding-left: 6px; }
.counts span { display: flex; align-items: center; gap: 5px; width: 55px; }
.upd { width: 346px; padding-left: 7px; }
.proxy { width: 108px; padding-left: 8px; gap: 5px; }

/* taskbar */
.taskbar { display: flex; flex: none; height: 40px; background: #292325; color: #fff; }
.start { width: 48px; justify-content: center; }
.start svg { width: 16px; height: 16px; }
.search {
  display: flex;
  align-items: center;
  gap: 9px;
  width: 344px;
  padding-left: 12px;
  border: 1px solid #5c5c5c;
  background: #333;
}
.search svg { width: 18px; height: 18px; }
.search input { flex: 1; min-width: 0; border: 0; padding: 2px 0 0; background: none; color: #fff; font: 14px/20px "Open Sans", sans-serif; }
.search input::placeholder { color: #d0d0d0; opacity: 1; }
.apps { display: flex; gap: 1px; }
.apps button { width: 48px; height: 40px; justify-content: center; }
.apps svg { width: 24px; height: 24px; }
.apps .run { background: linear-gradient(#8ea3cb, #8ea3cb) 50% 100% / 40px 2px no-repeat; }
.apps .split { background: linear-gradient(90deg, #8ea3cb 31px, #6b7792 31px) 50% 100% / 40px 2px no-repeat; }
.apps .active { background: linear-gradient(#8ea3cb, #8ea3cb) 50% 100% / 48px 2px no-repeat #575355; }
.tray { display: flex; align-items: center; margin-left: auto; font-size: 14px; }
.weather { width: 22px; height: 18px; }
.temp { margin-left: 9px; }
.aqi { margin: 0 13px 0 9px; }
.t16 { width: 16px; height: 16px; margin-right: 8px; }
.t18 { width: 18px; height: 16px; margin-right: 8px; }
.pen { height: 18px; }
.clock { display: flex; flex-direction: column; align-items: center; width: 64px; margin-right: 16px; font-size: 11px; line-height: 18px; }
.note { width: 16px; height: 16px; }
.peek { width: 5px; height: 40px; margin-left: 20px; border-left: 1px solid #6b6668; }
```
